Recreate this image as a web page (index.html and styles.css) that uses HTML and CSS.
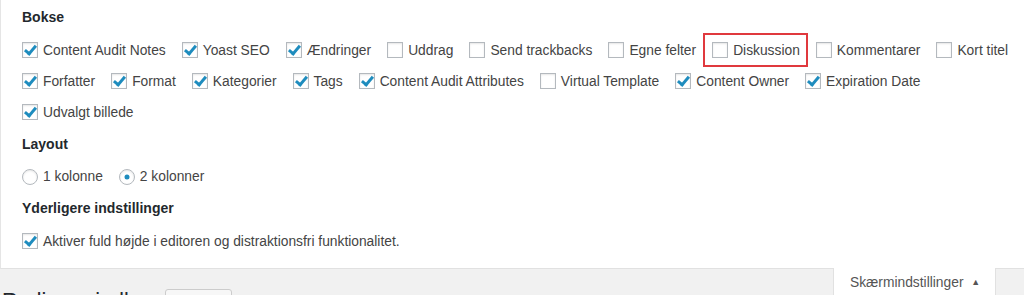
FILE: index.html
```html
<!DOCTYPE html>
<html lang="da">
<head>
    <meta charset="UTF-8">
    <meta name="viewport" content="width=device-width, initial-scale=1.0">
    <title>Skærmindstillinger</title>
    <link rel="stylesheet" href="styles.css">
</head>
<body>

<div class="screen-options">
    <fieldset class="metabox-prefs">
        <legend>Bokse</legend>
        <div class="options">
            <label><input type="checkbox" checked>Content Audit Notes</label>
            <label><input type="checkbox" checked>Yoast SEO</label>
            <label><input type="checkbox" checked>Ændringer</label>
            <label><input type="checkbox">Uddrag</label>
            <label><input type="checkbox">Send trackbacks</label>
            <label><input type="checkbox">Egne felter</label>
            <label class="highlight"><input type="checkbox">Diskussion</label>
            <label><input type="checkbox">Kommentarer</label>
            <label><input type="checkbox">Kort titel</label>
            <label><input type="checkbox" checked>Forfatter</label>
            <label><input type="checkbox" checked>Format</label>
            <label><input type="checkbox" checked>Kategorier</label>
            <label><input type="checkbox" checked>Tags</label>
            <label><input type="checkbox" checked>Content Audit Attributes</label>
            <label><input type="checkbox">Virtual Template</label>
            <label><input type="checkbox" checked>Content Owner</label>
            <label><input type="checkbox" checked>Expiration Date</label>
            <label><input type="checkbox" checked>Udvalgt billede</label>
        </div>
    </fieldset>

    <fieldset class="metabox-prefs">
        <legend>Layout</legend>
        <div class="options">
            <label><input type="radio" name="columns" value="1">1 kolonne</label>
            <label><input type="radio" name="columns" value="2" checked>2 kolonner</label>
        </div>
    </fieldset>

    <fieldset class="metabox-prefs">
        <legend>Yderligere indstillinger</legend>
        <div class="options">
            <label><input type="checkbox" checked>Aktiver fuld højde i editoren og distraktionsfri funktionalitet.</label>
        </div>
    </fieldset>
</div>

<div class="wrap">
    <div class="page-title">
        <h1>Redigere indlæg</h1>
        <a href="#" class="add-new">Tilføj ny</a>
    </div>
    <button type="button" class="screen-meta-toggle">Skærmindstillinger <span class="arrow">▲</span></button>
</div>

</body>
</html>
```

FILE: styles.css
```css
body {
    font-family: "Liberation Sans", Arial, sans-serif;
    font-size: 13.8px;
    color: #444;
    background-color: #f1f1f1;
    margin: 0;
    overflow: hidden;
}

.screen-options {
    background-color: #fff;
    border-left: 1px solid #e5e5e5;
    border-bottom: 1px solid #e1e1e1;
    padding: 1px 0 11px 21px;
}

.metabox-prefs {
    border: none;
    margin: 0;
    padding: 0;
}

.metabox-prefs legend {
    display: block;
    float: left;
    width: 100%;
    font-size: 14px;
    font-weight: bold;
    line-height: 19.6px;
    color: #23282d;
    margin: 7px 0 7px;
    padding: 0;
}

.options {
    clear: both;
    display: flex;
    flex-wrap: wrap;
    column-gap: 16px;
}

.options label {
    position: relative;
    display: flex;
    align-items: center;
    height: 31px;
    white-space: nowrap;
    cursor: pointer;
}

.options input {
    appearance: none;
    -webkit-appearance: none;
    position: relative;
    width: 16px;
    height: 16px;
    margin: 0 5px 0 0;
    border: 1px solid #b4b9be;
    background-color: #fff;
    box-shadow: inset 0 1px 2px rgba(0, 0, 0, 0.1);
    flex-shrink: 0;
}

.options input[type="radio"] {
    border-radius: 50%;
}

.options input[type="checkbox"]:checked::before {
    content: '';
    position: absolute;
    left: 4px;
    top: 0px;
    width: 4px;
    height: 9px;
    border: solid #1e8cbe;
    border-width: 0 3px 3px 0;
    transform: rotate(40deg);
}

.options input[type="radio"]:checked::before {
    content: '';
    position: absolute;
    left: 50%;
    top: 50%;
    width: 5px;
    height: 5px;
    border-radius: 50%;
    background-color: #1e8cbe;
    transform: translate(-50%, -50%);
}

.highlight::after {
    content: '';
    position: absolute;
    top: -2px;
    bottom: -1px;
    left: -9px;
    right: -8px;
    border: 2px solid #e0393e;
}

.wrap {
    display: flex;
    justify-content: space-between;
    align-items: flex-start;
    margin-top: -1px;
}

.page-title {
    display: flex;
    align-items: flex-start;
    padding: 19px 0 0 2px;
}

.page-title h1 {
    font-size: 21.5px;
    font-weight: normal;
    line-height: 29px;
    color: #23282d;
    margin: 0;
}

.add-new {
    display: inline-block;
    margin: 2px 0 0 5px;
    padding: 4px 10px;
    border: 1px solid #ccc;
    border-radius: 3px;
    background-color: #f7f7f7;
    color: #0073aa;
    font-size: 13px;
    text-decoration: none;
}

.screen-meta-toggle {
    box-sizing: border-box;
    font-family: inherit;
    font-size: 13.8px;
    color: #555;
    background-color: #fff;
    border: 1px solid #e1e1e1;
    border-top: none;
    margin: 0 28px 0 0;
    padding: 7px 0 12px 16px;
    width: 163px;
    white-space: nowrap;
    text-align: left;
    cursor: pointer;
}

.screen-meta-toggle .arrow {
    font-size: 9px;
    margin-left: 4px;
    vertical-align: 2px;
}
```
